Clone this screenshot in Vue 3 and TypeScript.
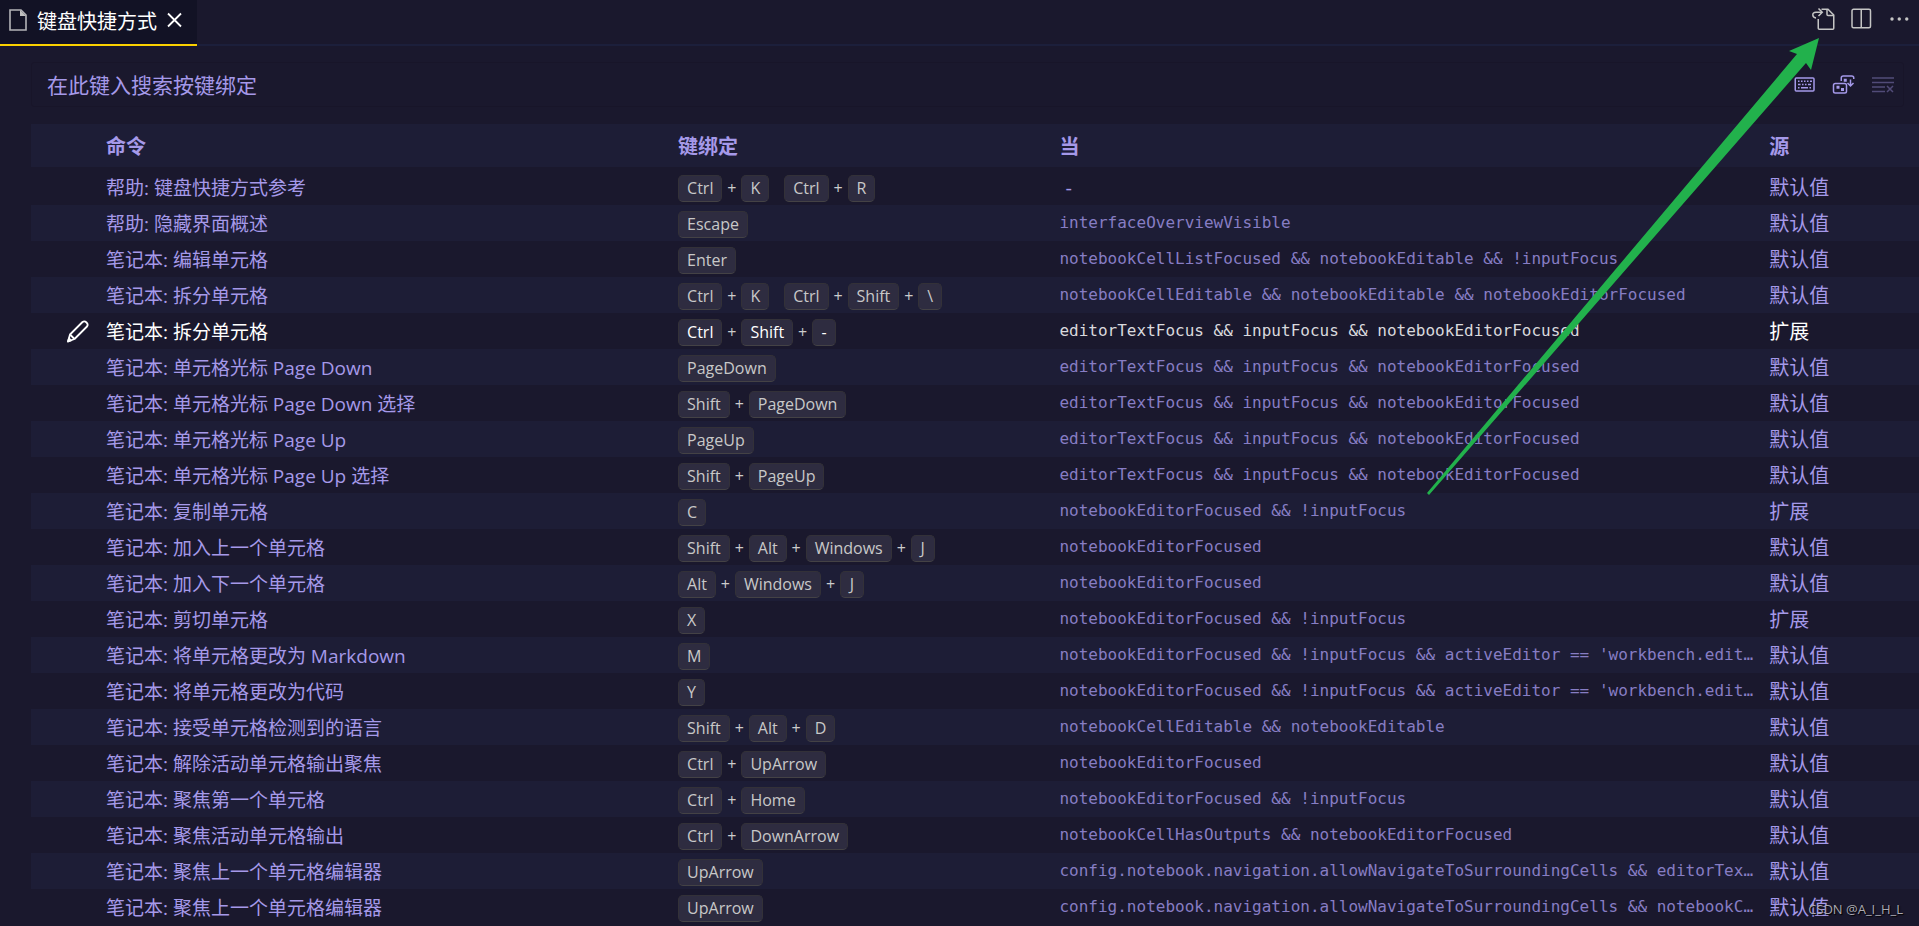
<script setup lang="ts">
import { ref } from 'vue'

interface Binding {
  command: string
  chords: string[][]
  when: string
  source: string
  selected?: boolean
}

const query = ref('')

const row = (command: string, keys: string, when: string, source = '默认值', selected = false): Binding => ({
  command,
  chords: keys.split('  ').map((chord) => chord.split(' ')),
  when,
  source,
  selected,
})

const cursorWhen = 'editorTextFocus && inputFocus && notebookEditorFocused'
const bindings: Binding[] = [
  row('帮助: 键盘快捷方式参考', 'Ctrl K  Ctrl R', ''),
  row('帮助: 隐藏界面概述', 'Escape', 'interfaceOverviewVisible'),
  row('笔记本: 编辑单元格', 'Enter', 'notebookCellListFocused && notebookEditable && !inputFocus'),
  row('笔记本: 拆分单元格', 'Ctrl K  Ctrl Shift \\', 'notebookCellEditable && notebookEditable && notebookEditorFocused'),
  row('笔记本: 拆分单元格', 'Ctrl Shift -', cursorWhen, '扩展', true),
  row('笔记本: 单元格光标 Page Down', 'PageDown', cursorWhen),
  row('笔记本: 单元格光标 Page Down 选择', 'Shift PageDown', cursorWhen),
  row('笔记本: 单元格光标 Page Up', 'PageUp', cursorWhen),
  row('笔记本: 单元格光标 Page Up 选择', 'Shift PageUp', cursorWhen),
  row('笔记本: 复制单元格', 'C', 'notebookEditorFocused && !inputFocus', '扩展'),
  row('笔记本: 加入上一个单元格', 'Shift Alt Windows J', 'notebookEditorFocused'),
  row('笔记本: 加入下一个单元格', 'Alt Windows J', 'notebookEditorFocused'),
  row('笔记本: 剪切单元格', 'X', 'notebookEditorFocused && !inputFocus', '扩展'),
  row('笔记本: 将单元格更改为 Markdown', 'M', "notebookEditorFocused && !inputFocus && activeEditor == 'workbench.editor.notebook'"),
  row('笔记本: 将单元格更改为代码', 'Y', "notebookEditorFocused && !inputFocus && activeEditor == 'workbench.editor.notebook'"),
  row('笔记本: 接受单元格检测到的语言', 'Shift Alt D', 'notebookCellEditable && notebookEditable'),
  row('笔记本: 解除活动单元格输出聚焦', 'Ctrl UpArrow', 'notebookEditorFocused'),
  row('笔记本: 聚焦第一个单元格', 'Ctrl Home', 'notebookEditorFocused && !inputFocus'),
  row('笔记本: 聚焦活动单元格输出', 'Ctrl DownArrow', 'notebookCellHasOutputs && notebookEditorFocused'),
  row('笔记本: 聚焦上一个单元格编辑器', 'UpArrow', 'config.notebook.navigation.allowNavigateToSurroundingCells && editorTextFocus && inputFocus'),
  row('笔记本: 聚焦上一个单元格编辑器', 'UpArrow', 'config.notebook.navigation.allowNavigateToSurroundingCells && notebookCursorNavigationMode'),
]
</script>

<template>
  <div class="workbench">
    <header class="tabs">
      <div class="tab">
        <svg class="file-icon" width="18" height="22" viewBox="0 0 18 22" aria-hidden="true">
          <path d="M1 1h11l5 5v15H1z" fill="none" stroke="#b4b4b8" stroke-width="1.600" />
          <path d="M11 1v6h6z" fill="#c0c0c0" />
        </svg>
        <span class="tab-title">键盘快捷方式</span>
        <button class="icon-button" aria-label="关闭">
          <svg width="24" height="24" viewBox="0 0 24 24" fill="none" stroke="#fff" stroke-width="1.800">
            <path d="M5 5.500l13 13M18 5.500l-13 13" />
          </svg>
        </button>
      </div>
      <div class="actions">
        <button class="icon-button" aria-label="打开键盘快捷方式 (JSON)">
          <svg width="24" height="24" viewBox="0 0 24 24" fill="none" stroke="#c5c5c5" stroke-width="1.500">
            <path d="M10.500 2.250h6.500L22.750 8v13.250q0 1-1 1h-13.500q-1 0-1-1V12" />
            <path d="M16 2.250v5.250q0 1 1 1h5.750" />
            <path d="M5 11C1 10.500 .500 5.250 5 5.250H11" />
            <path d="M7.500 1.500l3.750 3.750L7.500 9" />
          </svg>
        </button>
        <button class="icon-button" aria-label="向右拆分编辑器">
          <svg width="24" height="24" viewBox="0 0 24 24" fill="none" stroke="#c5c5c5" stroke-width="1.500">
            <rect x="3" y="2.250" width="18.500" height="18.500" rx="1.500" />
            <path d="M12.250 2.250V20.750" />
          </svg>
        </button>
        <button class="icon-button" aria-label="更多操作">
          <svg width="24" height="24" viewBox="0 0 24 24" fill="#c5c5c5">
            <circle cx="5" cy="12" r="1.700" /><circle cx="12.250" cy="12" r="1.700" /><circle cx="19.750" cy="12" r="1.700" />
          </svg>
        </button>
      </div>
    </header>

    <main class="editor">
      <div class="search">
        <input v-model="query" class="search-input" type="text" placeholder="在此键入搜索按键绑定" aria-label="在此键入搜索按键绑定" />
        <div class="search-actions">
          <button class="icon-button" aria-label="录制按键">
            <svg width="24" height="24" viewBox="0 0 24 24" fill="none" stroke="#a599e9" stroke-width="1.500">
              <rect x="2.250" y="5" width="18.750" height="13" rx="1" />
              <path d="M5 8.250h1.500m1.500 0h1.500m1.500 0h1.500m1.500 0h1.500m1.500 0h2M5 11.500h2.500m1.500 0h1.500m1.500 0h1.500m1.500 0h3M5 14.750h1.500m1.500 0h7m1.500 0h1.500" />
            </svg>
          </button>
          <button class="icon-button" aria-label="按优先级排序">
            <svg width="24" height="24" viewBox="0 0 24 24" fill="none" stroke="#a599e9" stroke-width="1.500">
              <path d="M9.250 8V5q0-2 2-2h8.500q2 0 2 2v1" />
              <rect x="1.500" y="10.500" width="13" height="9.500" rx="1.750" />
              <path d="M18.500 6.500v6.500M15.500 10l3 3 3-3" />
              <path d="M11.750 5.750h3v3h-3zM4.500 12.750h3v3h-3zM9 15h3v3H9z" fill="#a599e9" stroke="none" />
            </svg>
          </button>
          <button class="icon-button" aria-label="清除键绑定搜索输入" disabled>
            <svg width="24" height="24" viewBox="0 0 24 24" fill="none" stroke="#a599e9" stroke-width="1.500">
              <path d="M1 5h22M1 9.500h22M1 14h13M1 18.500h13M16 13l6 6M22 13l-6 6" />
            </svg>
          </button>
        </div>
      </div>

      <table class="bindings">
        <colgroup>
          <col class="col-action" />
          <col class="col-command" />
          <col class="col-keys" />
          <col class="col-when" />
          <col />
        </colgroup>
        <thead>
          <tr>
            <td></td>
            <th scope="col">命令</th>
            <th scope="col">键绑定</th>
            <th scope="col">当</th>
            <th scope="col">源</th>
          </tr>
        </thead>
        <tbody>
          <tr v-for="(item, index) in bindings" :key="index" :class="{ selected: item.selected }">
            <td>
              <button v-if="item.selected" class="icon-button edit" aria-label="更改键绑定">
                <svg width="24" height="24" viewBox="0 0 24 24" fill="none" stroke="#fff" stroke-width="1.800" stroke-linejoin="round">
                  <path d="M2 21.500l2-7L16.500 2q2-1.500 4 .5t.5 4L8.500 19z" />
                  <path d="M4 14.500l4.500 4.500M2 21.500l3-1-2-2z" />
                </svg>
              </button>
            </td>
            <td class="command">{{ item.command }}</td>
            <td>
              <span class="keys">
                <span v-for="(chord, c) in item.chords" :key="c" class="chord">
                  <template v-for="(key, k) in chord" :key="k">
                    <span v-if="k > 0" class="plus">+</span>
                    <kbd class="key">{{ key }}</kbd>
                  </template>
                </span>
              </span>
            </td>
            <td>
              <code v-if="item.when">{{ item.when }}</code>
              <span v-else class="empty">-</span>
            </td>
            <td>{{ item.source }}</td>
          </tr>
        </tbody>
      </table>
    </main>

    <svg class="arrow" width="392" height="457" viewBox="0 0 392 457" aria-hidden="true">
      <path d="M392 0L362 13L370 16L0 455L2 457L379 25L384 32Z" fill="#22b14c" />
    </svg>
    <span class="watermark">CSDN @A_I_H_L</span>
  </div>
</template>

<style>
body {
  background: #1a182d;
}
</style>

<style scoped>
.workbench {
  position: relative;
  display: flex;
  flex-direction: column;
  height: 100vh;
  overflow: hidden;
  background: #1a182d;
  color: #a599e9;
  font-family: "Open Sans", "Noto Sans CJK SC", sans-serif;
  font-size: 20px;
}

.tabs {
  display: flex;
  flex: none;
  justify-content: space-between;
  height: 46px;
  box-shadow: inset 0 -2px #1c1f3b;
}

.tab {
  display: flex;
  align-items: center;
  box-sizing: border-box;
  padding: 0 10px 4px 9px;
  border-bottom: 2px solid #fad000;
  background: #121225;
  color: #fff;
}

.tab-title {
  margin: 0 6px 0 10px;
}

.actions {
  display: flex;
  gap: 14px;
  padding: 7px 8px 0 0;
}

.icon-button {
  display: block;
  flex: none;
  width: 24px;
  height: 24px;
  padding: 0;
  border: 0;
  background: none;
}

.icon-button svg {
  display: block;
}

.icon-button:disabled {
  opacity: 0.4;
}

.editor {
  padding: 16px 0 0 31px;
}

.search {
  display: flex;
  align-items: center;
  box-sizing: border-box;
  height: 45px;
  margin: 0 15px 17px 0;
  padding-right: 8px;
  border: 1px solid #181529;
  border-radius: 3px;
}

.search-input {
  flex: 1;
  min-width: 0;
  padding: 0 15px;
  border: 0;
  outline: 0;
  background: none;
  color: #a599e9;
  font: inherit;
  font-size: 21px;
}

.search-input::placeholder {
  color: #a599e9;
  opacity: 1;
}

.search-actions {
  display: flex;
  gap: 15px;
}

.bindings {
  width: 100%;
  table-layout: fixed;
  border-collapse: separate;
  border-spacing: 0;
}

.col-action {
  width: 75px;
}

.col-command {
  width: 30.3%;
}

.col-keys {
  width: 20.2%;
}

.col-when {
  width: 37.6%;
}

th,
td {
  box-sizing: border-box;
  height: 36px;
  padding: 2px 15px 0 0;
  overflow: hidden;
  line-height: 34px;
  text-align: left;
  text-overflow: ellipsis;
  vertical-align: middle;
  white-space: nowrap;
}

thead tr {
  background: #1d1d36;
}

thead th,
thead td {
  height: 45px;
  border-bottom: 2px solid #1a182d;
}

tbody tr:nth-child(even) {
  background: #1d1d36;
}

.command {
  font-size: 19px;
}

.edit {
  margin-left: 35px;
}

.keys {
  display: flex;
  gap: 15px;
  align-items: center;
  color: #c8c8c8;
  font-family: "Open Sans", sans-serif;
  font-size: 16px;
}

.chord {
  display: flex;
  align-items: center;
}

.plus {
  width: 19px;
  color: #cccccc;
  text-align: center;
}

.key {
  box-sizing: border-box;
  min-width: 24px;
  padding: 0 8px;
  border: 1px solid #333138;
  border-bottom-color: #444245;
  border-radius: 5px;
  background: #2e2c40;
  font-family: inherit;
  line-height: 25px;
  text-align: center;
}

code {
  display: block;
  padding-bottom: 2px;
  overflow: hidden;
  color: #877dc4;
  font-family: "DejaVu Sans Mono", monospace;
  font-size: 16px;
  line-height: 32px;
  text-overflow: ellipsis;
}

.empty {
  padding-left: 6px;
}

.selected,
.selected .key {
  color: #fff;
}

.selected code {
  color: #d9d9dd;
}

.arrow {
  position: absolute;
  top: 38px;
  right: 100px;
}

.watermark {
  position: absolute;
  right: 16px;
  bottom: 7px;
  color: #aaa9b2;
  font-family: "Open Sans", sans-serif;
  font-size: 13px;
  line-height: 20px;
  text-shadow: 1px 1px 1px #000;
}
</style>
